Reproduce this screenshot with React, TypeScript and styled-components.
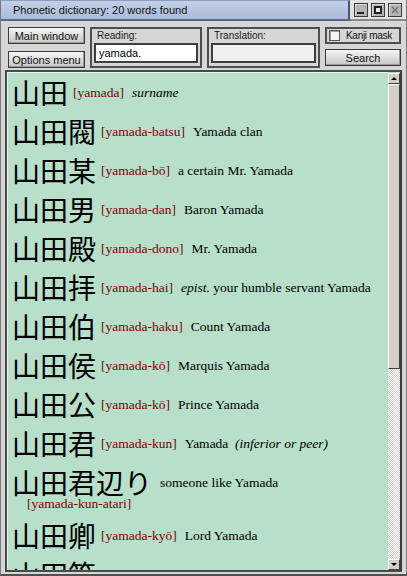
import styled, { createGlobalStyle } from "styled-components";
import { ReactNode } from "react";

const GlobalStyle = createGlobalStyle`
  html, body {
    margin: 0;
    padding: 0;
    background: #d6d6d6;
  }
  * {
    box-sizing: border-box;
  }
`;

const uiFont = `"Liberation Sans", Arial, sans-serif`;
const serifFont = `"Liberation Serif", "Times New Roman", serif`;
const cjkFont = `"Noto Sans CJK JP", "Noto Sans", sans-serif`;

const Window = styled.div`
  width: 407px;
  height: 576px;
  display: flex;
  flex-direction: column;
  background: #d6d6d6;
  border-bottom: 2px solid #505050;
  border-left: 1px solid #7a7a7a;
  border-right: 1px solid #7a7a7a;
  overflow: hidden;
  font-family: ${uiFont};
`;

const TitleRow = styled.div`
  display: flex;
  height: 21px;
`;

const TitleBar = styled.div`
  flex: 1;
  display: flex;
  align-items: center;
  padding-left: 12px;
  background: linear-gradient(#c4d0e6, #a9badb);
  border-top: 1px solid #8c9cbc;
  border-right: 2px solid #4c5670;
  border-bottom: 2px solid #5a6582;
  font-size: 11px;
  color: #101010;
`;

const Controls = styled.div`
  width: 56px;
  display: flex;
  align-items: center;
  gap: 3px;
  padding-left: 4px;
  background: #e2e2e2;
  border-bottom: 2px solid #8a8a8a;
`;

const ControlButton = styled.div`
  width: 14px;
  height: 14px;
  display: flex;
  align-items: center;
  justify-content: center;
  background: #b4b4b4;
  border: 1px solid #3c3c3c;
  box-shadow: inset 1px 1px 0 #dadada;
`;

const Toolbar = styled.div`
  display: flex;
  height: 49px;
  padding: 6px 0 0 7px;
`;

const ButtonColumn = styled.div`
  display: flex;
  flex-direction: column;
  gap: 7px;
  width: 77px;
  margin-right: 5px;
`;

const Button = styled.div<{ $w?: number }>`
  width: ${(p) => p.$w ?? 77}px;
  height: 17px;
  display: flex;
  align-items: center;
  justify-content: center;
  background: linear-gradient(#f6f6f6, #c6c6c6);
  border: 1px solid #3a3a3a;
  box-shadow: inset -1px -1px 0 #9a9a9a;
  font-size: 11px;
  color: #101010;
`;

const GroupBox = styled.div<{ $w: number }>`
  width: ${(p) => p.$w}px;
  height: 41px;
  margin-right: 5px;
  border: 2px solid #4e4e4e;
  padding: 0 2px;
  display: flex;
  flex-direction: column;
`;

const GroupLabel = styled.div`
  height: 14px;
  line-height: 14px;
  padding-left: 3px;
  font-size: 10px;
  color: #181818;
`;

const TextField = styled.div<{ $filled?: boolean }>`
  height: 20px;
  border: 2px solid #3e3e3e;
  background: ${(p) => (p.$filled ? "#ffffff" : "#f0f0f0")};
  padding-left: 3px;
  display: flex;
  align-items: center;
  font-size: 11px;
  color: #000;
`;

const RightColumn = styled.div`
  display: flex;
  flex-direction: column;
  gap: 5px;
`;

const MaskBox = styled.div`
  width: 76px;
  height: 17px;
  border: 2px solid #4e4e4e;
  display: flex;
  align-items: center;
  padding-left: 2px;
  gap: 6px;
  font-size: 10px;
  letter-spacing: -0.3px;
  color: #101010;
`;

const CheckBox = styled.div`
  width: 11px;
  height: 11px;
  background: #f4f4f4;
  border: 1px solid #5a5a5a;
  box-shadow: inset 1px 1px 0 #9a9a9a;
`;

const ListPanel = styled.div`
  height: 502px;
  margin: 0 4px 0 4px;
  display: flex;
  border: 2px solid #4a4a4a;
  border-right-color: #3a3a3a;
  background: #b7dfc9;
`;

const ListContent = styled.div`
  flex: 1;
  overflow: hidden;
  padding-left: 4px;
  border-left: 1px solid #e8f4ec;
  border-top: 1px solid #e8f4ec;
`;

const Row = styled.div<{ $stacked?: boolean }>`
  display: flex;
  flex-direction: ${(p) => (p.$stacked ? "column" : "row")};
  align-items: ${(p) => (p.$stacked ? "flex-start" : "center")};
  height: ${(p) => (p.$stacked ? 53 : 39)}px;
  white-space: nowrap;
`;

const Line = styled.div`
  display: flex;
  align-items: center;
  height: 39px;
`;

const Kanji = styled.span`
  font-family: ${cjkFont};
  font-size: 28px;
  line-height: 39px;
  color: #000;
`;

const Reading = styled.span<{ $below?: boolean }>`
  font-family: ${serifFont};
  font-size: 13.5px;
  color: #7e0000;
  margin-left: ${(p) => (p.$below ? 15 : 5)}px;
  margin-top: ${(p) => (p.$below ? -5 : 0)}px;
  line-height: 14px;
`;

const Def = styled.span`
  font-family: ${serifFont};
  font-size: 13.5px;
  color: #000;
  margin-left: 8px;
  line-height: 14px;
`;

const Em = styled.i`
  font-style: italic;
`;

const ScrollBar = styled.div`
  width: 12px;
  display: flex;
  flex-direction: column;
  padding-top: 1px;
`;

const ArrowButton = styled.div`
  height: 11px;
  display: flex;
  align-items: center;
  justify-content: center;
  background: #d4d0c8;
  border: 1px solid;
  border-color: #ffffff #404040 #404040 #ffffff;
`;

const Thumb = styled.div`
  height: 285px;
  background: #d4d0c8;
  border: 1px solid;
  border-color: #ffffff #404040 #404040 #ffffff;
`;

const Track = styled.div`
  flex: 1;
  background: repeating-conic-gradient(#ffffff 0 25%, #d4d0c8 0 50%) 0 0 / 2px 2px;
`;

type Entry = {
  kanji: string;
  reading: string;
  def: ReactNode;
  stacked?: boolean;
};

const entries: Entry[] = [
  { kanji: "山田", reading: "[yamada]", def: <Em>surname</Em> },
  { kanji: "山田閥", reading: "[yamada-batsu]", def: "Yamada clan" },
  { kanji: "山田某", reading: "[yamada-bō]", def: "a certain Mr. Yamada" },
  { kanji: "山田男", reading: "[yamada-dan]", def: "Baron Yamada" },
  { kanji: "山田殿", reading: "[yamada-dono]", def: "Mr. Yamada" },
  {
    kanji: "山田拝",
    reading: "[yamada-hai]",
    def: (
      <>
        <Em>epist.</Em> your humble servant Yamada
      </>
    ),
  },
  { kanji: "山田伯", reading: "[yamada-haku]", def: "Count Yamada" },
  { kanji: "山田侯", reading: "[yamada-kō]", def: "Marquis Yamada" },
  { kanji: "山田公", reading: "[yamada-kō]", def: "Prince Yamada" },
  {
    kanji: "山田君",
    reading: "[yamada-kun]",
    def: (
      <>
        Yamada&nbsp; <Em>(inferior or peer)</Em>
      </>
    ),
  },
  {
    kanji: "山田君辺り",
    reading: "[yamada-kun-atari]",
    def: "someone like Yamada",
    stacked: true,
  },
  { kanji: "山田卿", reading: "[yamada-kyō]", def: "Lord Yamada" },
  { kanji: "山田笹", reading: "[yamada-sasa]", def: "" },
];

function EntryRow({ kanji, reading, def, stacked }: Entry) {
  if (stacked) {
    return (
      <Row $stacked>
        <Line>
          <Kanji>{kanji}</Kanji>
          <Def>{def}</Def>
        </Line>
        <Reading $below>{reading}</Reading>
      </Row>
    );
  }
  return (
    <Row>
      <Kanji>{kanji}</Kanji>
      <Reading>{reading}</Reading>
      <Def>{def}</Def>
    </Row>
  );
}

export default function App() {
  return (
    <Window>
      <GlobalStyle />
      <TitleRow>
        <TitleBar>Phonetic dictionary: 20 words found</TitleBar>
        <Controls>
          <ControlButton>
            <svg width="10" height="10" viewBox="0 0 10 10">
              <rect x="1" y="7" width="7" height="2" fill="#202020" />
            </svg>
          </ControlButton>
          <ControlButton>
            <svg width="10" height="10" viewBox="0 0 10 10">
              <rect x="1" y="1" width="8" height="8" fill="#202020" />
              <rect x="3" y="3" width="4" height="4" fill="#e8e8e8" />
            </svg>
          </ControlButton>
          <ControlButton>
            <svg width="10" height="10" viewBox="0 0 10 10">
              <path d="M2 2 L8 8 M8 2 L2 8" stroke="#707070" strokeWidth="1.2" />
            </svg>
          </ControlButton>
        </Controls>
      </TitleRow>
      <Toolbar>
        <ButtonColumn>
          <Button>Main window</Button>
          <Button>Options menu</Button>
        </ButtonColumn>
        <GroupBox $w={112}>
          <GroupLabel>Reading:</GroupLabel>
          <TextField $filled>yamada.</TextField>
        </GroupBox>
        <GroupBox $w={113}>
          <GroupLabel>Translation:</GroupLabel>
          <TextField />
        </GroupBox>
        <RightColumn>
          <MaskBox>
            <CheckBox />
            Kanji mask
          </MaskBox>
          <Button $w={76}>Search</Button>
        </RightColumn>
      </Toolbar>
      <ListPanel>
        <ListContent>
          {entries.map((e, i) => (
            <EntryRow key={i} {...e} />
          ))}
        </ListContent>
        <ScrollBar>
          <ArrowButton>
            <svg width="6" height="4" viewBox="0 0 6 4">
              <path d="M3 0 L6 3 L0 3 Z" fill="#000" />
            </svg>
          </ArrowButton>
          <Thumb />
          <Track />
          <ArrowButton>
            <svg width="6" height="4" viewBox="0 0 6 4">
              <path d="M0 0 L6 0 L3 3 Z" fill="#000" />
            </svg>
          </ArrowButton>
        </ScrollBar>
      </ListPanel>
    </Window>
  );
}
